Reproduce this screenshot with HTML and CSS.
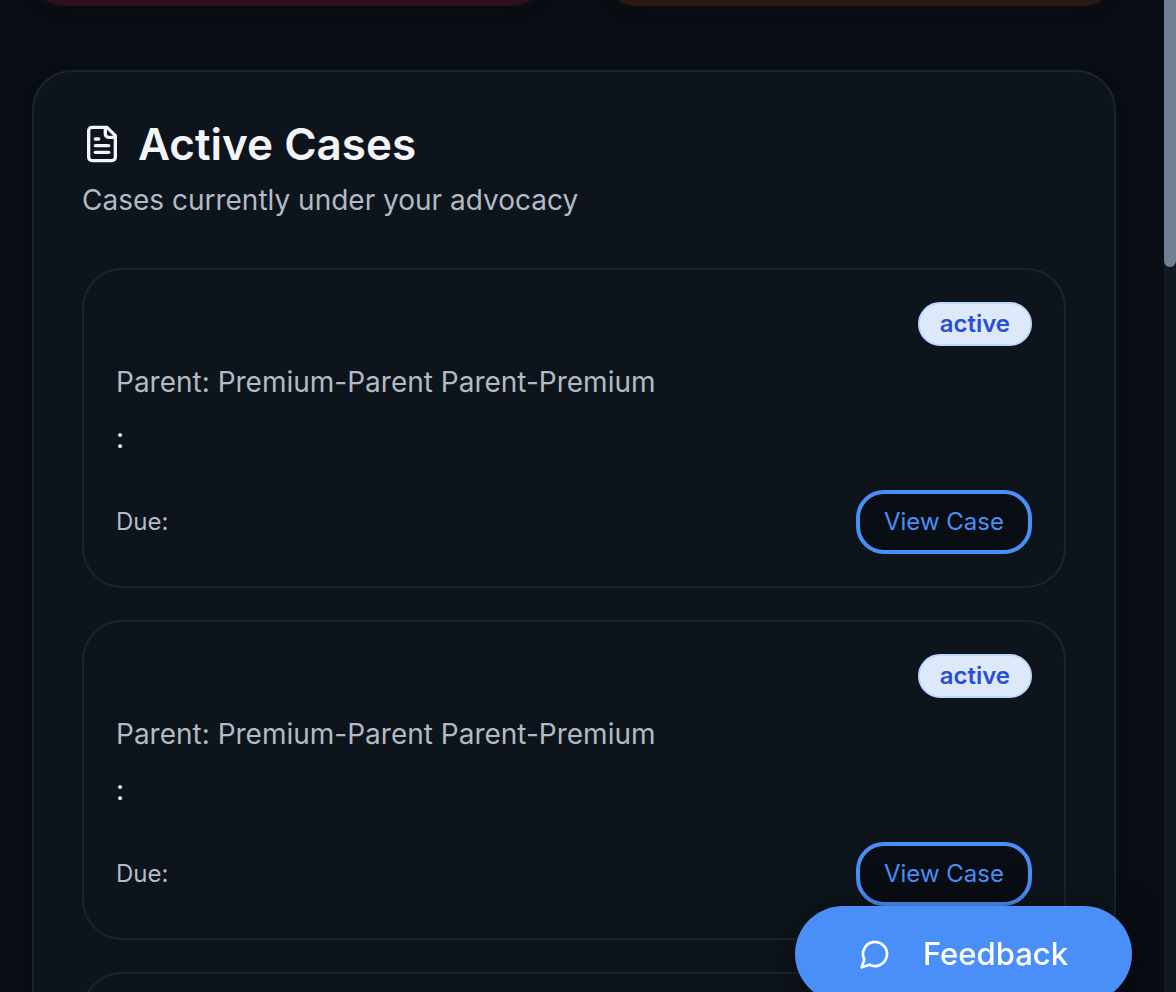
FILE: index.html
```html
<!DOCTYPE html>
<html lang="en">
<head>
<meta charset="utf-8">
<meta name="viewport" content="width=device-width, initial-scale=1">
<title>Active Cases</title>
<link rel="stylesheet" href="styles.css">
</head>
<body>
<div class="app">
  <main class="page">
    <div class="stats">
      <div class="stat stat-rose"></div>
      <div class="stat stat-amber"></div>
    </div>
    <section class="panel" aria-labelledby="cases-title">
      <header class="panel-header">
        <h2 class="panel-title" id="cases-title">
          <svg class="title-icon" viewBox="0 0 24 24" fill="none" stroke="currentColor" stroke-width="2" stroke-linecap="round" stroke-linejoin="round" aria-hidden="true">
            <path d="M15 2H6a2 2 0 0 0-2 2v16a2 2 0 0 0 2 2h12a2 2 0 0 0 2-2V7Z"/>
            <path d="M14 2v4a2 2 0 0 0 2 2h4"/>
            <path d="M10 9H8"/>
            <path d="M16 13H8"/>
            <path d="M16 17H8"/>
          </svg>
          Active Cases
        </h2>
        <p class="panel-subtitle">Cases currently under your advocacy</p>
      </header>
      <div class="case-list">
        <article class="case">
          <div class="case-top"><span class="badge">active</span></div>
          <p class="case-parent">Parent: Premium-Parent Parent-Premium</p>
          <p class="case-detail">:</p>
          <div class="case-footer">
            <span class="case-due">Due:</span>
            <button class="view-button" type="button">View Case</button>
          </div>
        </article>
        <article class="case">
          <div class="case-top"><span class="badge">active</span></div>
          <p class="case-parent">Parent: Premium-Parent Parent-Premium</p>
          <p class="case-detail">:</p>
          <div class="case-footer">
            <span class="case-due">Due:</span>
            <button class="view-button" type="button">View Case</button>
          </div>
        </article>
        <article class="case">
          <div class="case-top"></div>
        </article>
      </div>
    </section>
  </main>
  <div class="scroll-track" aria-hidden="true"><div class="scroll-thumb"></div></div>
  <button class="feedback" type="button">
    <svg class="feedback-icon" viewBox="0 0 24 24" fill="none" stroke="currentColor" stroke-width="2" stroke-linecap="round" stroke-linejoin="round" aria-hidden="true">
      <path d="M7.9 20A9 9 0 1 0 4 16.1L2 22Z"/>
    </svg>
    Feedback
  </button>
</div>
</body>
</html>
```

FILE: styles.css
```css
* { box-sizing: border-box; }

body {
  margin: 0;
  background: #090d14;
  color: #f3f4f8;
  font-family: Inter, "Liberation Sans", sans-serif;
  font-size: 28px;
  line-height: 40px;
}

h2, p { margin: 0; font-weight: 400; }
button { font-family: inherit; cursor: pointer; }

.app {
  display: flex;
  height: 100vh;
  overflow: hidden;
}

.page {
  flex: 1;
  min-width: 0;
  padding: 0 48px 0 32px;
}

.stats {
  display: flex;
  align-items: flex-end;
  gap: 60px;
  height: 6px;
  margin-bottom: 64px;
}

.stat {
  flex: 1;
  height: 160px;
  border-radius: 32px;
  box-shadow: 0 4px 12px #0c0f10;
}
.stat-rose { background: #2d111e; }
.stat-amber { background: #291a13; }

.panel {
  padding: 48px;
  border: 2px solid #1a2430;
  border-radius: 40px;
  background: #0d141b;
  box-shadow: 0 2px 8px #0c0f10;
}

.panel-header { margin-bottom: 48px; }

.panel-title {
  display: flex;
  align-items: center;
  gap: 16px;
  font-size: 44px;
  font-weight: 600;
  line-height: 48px;
  margin-bottom: 12px;
}
.title-icon { width: 40px; height: 40px; }

.panel-subtitle, .case-parent, .case-due { color: #b3bac5; }

.case-list {
  display: flex;
  flex-direction: column;
  gap: 32px;
}

.case {
  padding: 32px;
  border: 2px solid #1a2532;
  border-radius: 40px;
}

.case-top {
  display: flex;
  justify-content: flex-end;
  margin-bottom: 16px;
}

.badge {
  padding: 4px 20px;
  border: 2px solid #bfd7fe;
  border-radius: 22px;
  background: #dde8fb;
  color: #2b4fd0;
  font-size: 24px;
  font-weight: 600;
  line-height: 32px;
}

.case-parent { margin-bottom: 16px; }
.case-detail { margin-bottom: 32px; }

.case-footer {
  display: flex;
  align-items: center;
  justify-content: space-between;
}
.case-due { font-size: 24px; }

.view-button {
  padding: 0 24px;
  border: 4px solid #4a8ff7;
  border-radius: 28px;
  background: #090d14;
  color: #4a8ff7;
  font-size: 24px;
  line-height: 56px;
}

.scroll-track {
  width: 12px;
  background: #111820;
}
.scroll-thumb {
  height: 267px;
  border-radius: 0 0 6px 6px;
  background: #708093;
}

.feedback {
  position: fixed;
  right: 44px;
  bottom: -10px;
  display: flex;
  align-items: center;
  gap: 32px;
  padding: 24px 64px;
  border: 0;
  border-radius: 48px;
  background: #4a8ff7;
  color: #fff;
  font-size: 31px;
  font-weight: 500;
  line-height: 48px;
  box-shadow: 0 8px 40px rgba(0, 0, 0, 0.5);
}
.feedback-icon { width: 32px; height: 32px; }
```
